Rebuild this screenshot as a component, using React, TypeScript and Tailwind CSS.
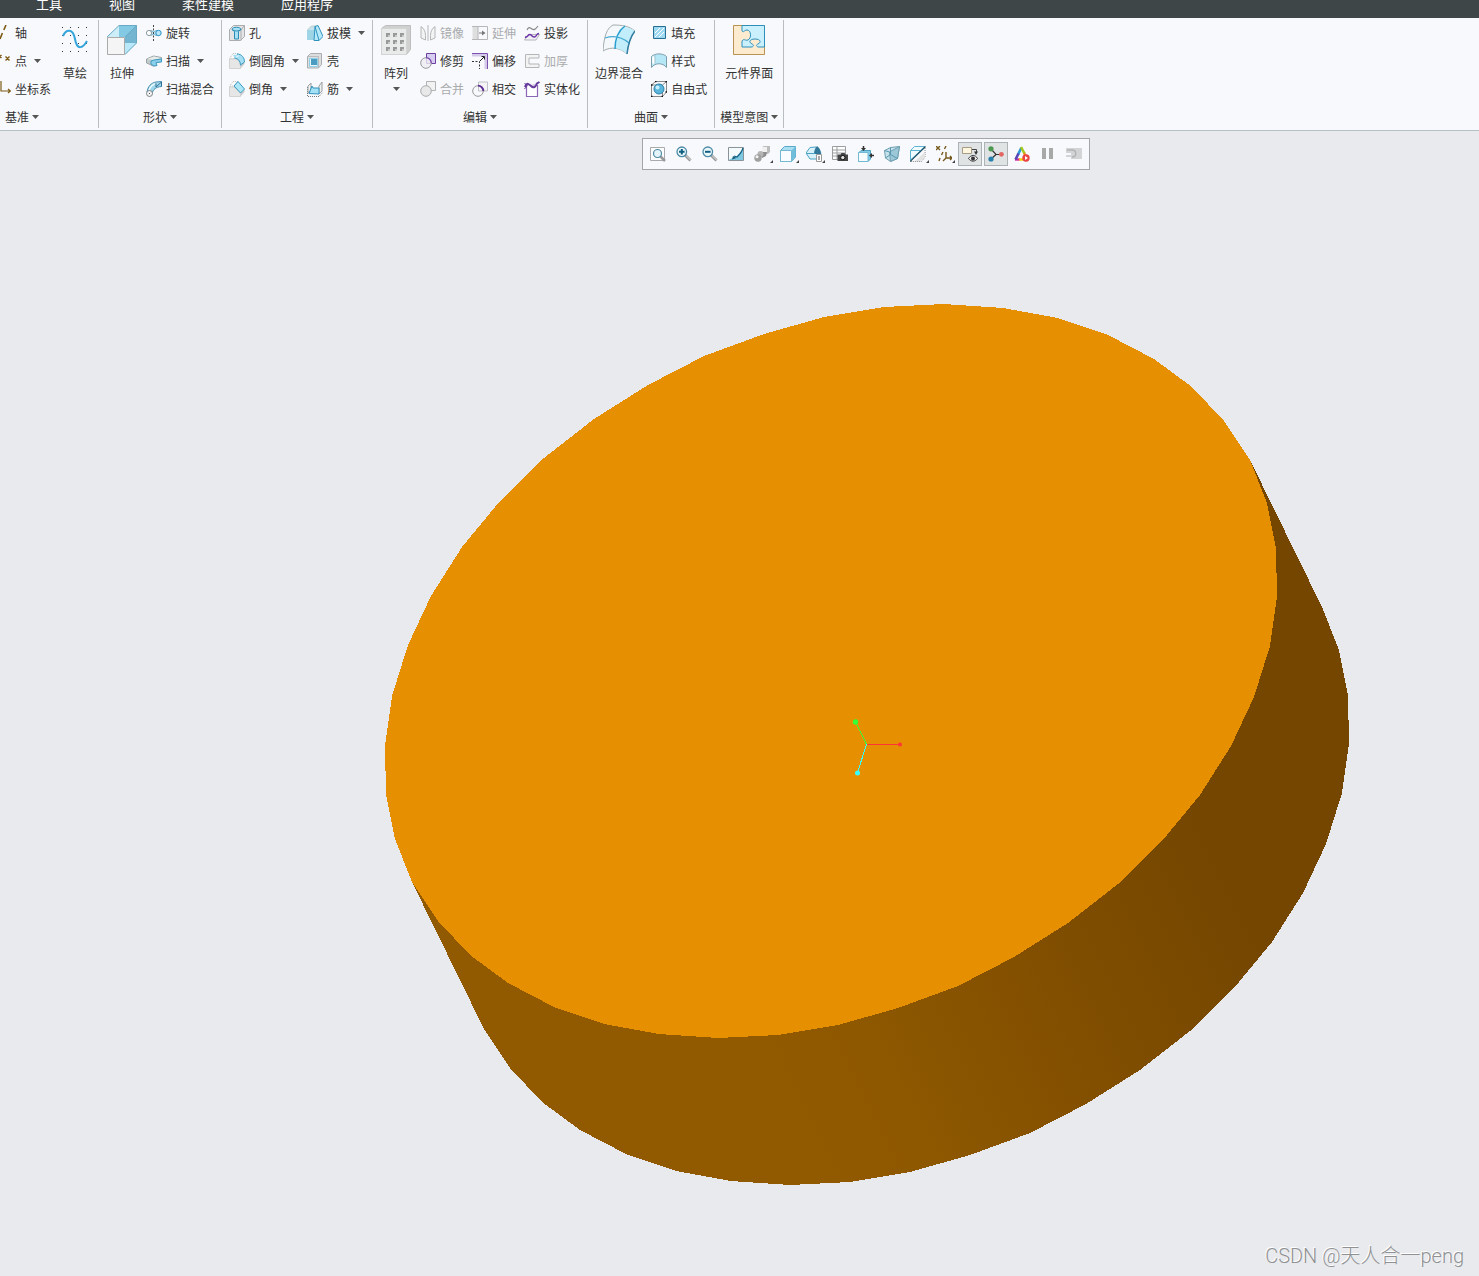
import type { ReactNode } from 'react';

type Tool = {
  label: string;
  icon: ReactNode;
  menu?: boolean;
  disabled?: boolean;
};

type ViewTool = {
  label: string;
  icon: ReactNode;
  menu?: boolean;
  active?: boolean;
};

const tabs = ['工具', '视图', '柔性建模', '应用程序'];

function Icon({ children }: { children: ReactNode }) {
  return (
    <svg viewBox="0 0 16 16" className="h-4 w-4 shrink-0" fill="none" aria-hidden="true">
      {children}
    </svg>
  );
}

// Datum icons run off the left edge of the window, only their right part shows
function DatumIcon({ children }: { children: ReactNode }) {
  return (
    <svg viewBox="0 0 11 16" className="h-4 w-[11px] shrink-0" fill="none" stroke="#7d5a14" strokeWidth="1.4" aria-hidden="true">
      {children}
    </svg>
  );
}

function BigIcon({ children }: { children: ReactNode }) {
  return (
    <svg viewBox="0 0 32 32" className="h-8 w-8 shrink-0" fill="none" aria-hidden="true">
      {children}
    </svg>
  );
}

function Caret() {
  return (
    <svg viewBox="0 0 7 4" className="h-1 w-[7px] shrink-0" aria-hidden="true">
      <path d="M0 0h7L3.5 4z" fill="#555" />
    </svg>
  );
}

const datumTools: Tool[] = [
  { label: '轴', icon: <DatumIcon><path d="M6 0 3.8 5M2.4 8 0 14" strokeWidth="1.6" /></DatumIcon> },
  {
    label: '点',
    menu: true,
    icon: <DatumIcon><path d="m5.5 3.5 4 4m0-4-4 4M-2 2l3.500 3m0-3L-2 5" /></DatumIcon>,
  },
  { label: '坐标系', icon: <DatumIcon><path d="M1 0v10h9M8 8l2.500 2L8 12" strokeWidth="1.2" /></DatumIcon> },
];

const shapeTools: Tool[] = [
  {
    label: '旋转',
    icon: (
      <Icon>
        <path d="M3 5.500c3 0 4 1 4.500 1.500C9 6 10 5.500 12 5.500v5c-2 0-3-.5-4.500-1.500-1 1-2.500 1.500-4.500 1.500z" fill="#bfe4f3" stroke="#58a9cc" />
        <circle cx="3" cy="8" r="2.600" fill="#fff" stroke="#8d9aa0" />
        <circle cx="12.500" cy="8" r="2.700" fill="#b9e6f8" stroke="#2f93c4" />
        <path d="M7.500 0v16" stroke="#444" strokeDasharray="2 1.500" />
      </Icon>
    ),
  },
  {
    label: '扫描',
    menu: true,
    icon: (
      <Icon>
        <path d="m.5 6 7-3 8 1.500v4L9 9.500l1 3-3 .5-4-2-2.500-1z" fill="#c3cacc" stroke="#9aa3a6" />
        <path d="m1 6 7-2.500 7 1.500-7 2z" fill="#e8ecec" />
        <path d="m5 8 3-1 7.500-1v3L10 9.500l1 3-3 .5-3-2z" fill="#8ccfe8" stroke="#3d9cc4" />
      </Icon>
    ),
  },
  {
    label: '扫描混合',
    icon: (
      <Icon>
        <path d="M1 11c1-6 4-9 9-10l5.500-.5v5C10 6 7 8 6 13z" fill="#9fd6ec" stroke="#4a8fb0" />
        <path d="M3 10c1-5 4-7 8-8" stroke="#e9f8fd" strokeWidth="1.500" />
        <path d="M10 1.500V6l5.500-5v4.500" stroke="#2f6f92" />
        <circle cx="3.500" cy="12.500" r="3" fill="#f3f3f3" stroke="#7d8487" />
        <path d="M3.500 12v1" stroke="#555" />
      </Icon>
    ),
  },
];

const engineeringTools: Tool[] = [
  {
    label: '孔',
    icon: (
      <Icon>
        <path d="m.5 4.500 4-4h11v11l-4 4H.5z" fill="#e4e4e4" stroke="#a9adaf" />
        <path d="M12 15.500V5l3.500-4.500" stroke="#a9adaf" />
        <path d="M3 4.500c0-3 9-3 9 0L9.500 6.500V14h-4V6.500z" fill="#a8e0f5" stroke="#2d8cb5" />
        <path d="M3 4.500c2 2 7 2 9 0" stroke="#2d8cb5" />
      </Icon>
    ),
  },
  {
    label: '倒圆角',
    menu: true,
    icon: (
      <Icon>
        <path d="M.5 5.500 4 .5h5L5.500 5.500z" fill="#fafafa" stroke="#bbb" strokeDasharray="1 1" />
        <path d="M.5 6H5c4 0 6.500 3 6.500 6v3.500H.5z" fill="#e6e6e6" stroke="#d2d2d2" />
        <path d="m11.500 15.500 4-4.500V9l-4 3z" fill="#c8cacb" />
        <path d="M3.500 1H8c5 0 7.500 4 7.500 8l-4 3c0-4-2.500-6.500-6-7z" fill="#a6dff4" />
        <path d="M8 1c5 0 7.500 4 7.500 8l-4 3c0-4-2.500-6.500-6-7" stroke="#3b9ac2" />
        <path d="M4 1.500h4M7 4l3-1.500" stroke="#e6f7fc" />
      </Icon>
    ),
  },
  {
    label: '倒角',
    menu: true,
    icon: (
      <Icon>
        <path d="M.5 5.500 4 .5h5L5 5z" fill="#fafafa" stroke="#bbb" strokeDasharray="1 1" />
        <path d="M.5 6H5l6.500 6v3.500H.5z" fill="#e6e6e6" stroke="#d2d2d2" />
        <path d="m11.500 15.500 4-4.500V8.500l-4 3.500z" fill="#c8cacb" />
        <path d="m5 5 4-4.500 6.500 7.500-4 4z" fill="#ace6f7" stroke="#3b9ac2" />
      </Icon>
    ),
  },
];

const engineeringExtras: Tool[] = [
  {
    label: '拔模',
    menu: true,
    icon: (
      <Icon>
        <path d="m0 5 4-4h6L7 14H0z" fill="#c4e3ed" />
        <path d="M0 5h7v10H0z" fill="#9dd4e6" />
        <path d="M.5 5 4.500 1H10" stroke="#c3cccf" />
        <path d="M8 1.500 11 .5l5 11-4 4H7z" fill="#b6eafa" stroke="#2f93be" />
        <path d="m8 1.500 4 14" stroke="#2f93be" />
      </Icon>
    ),
  },
  {
    label: '壳',
    icon: (
      <Icon>
        <path d="m.5 3.500 3-3h11v11l-3 3.500H.5z" fill="#dedede" stroke="#a9adaf" />
        <path d="M.5 3.500h11V15" stroke="#b8bbbd" />
        <path d="M2.500 5.500h8v8h-8z" fill="#e8f7fc" stroke="#8fd0e8" />
        <path d="M4 6h6v6H4z" fill="#4a9dc0" />
      </Icon>
    ),
  },
  {
    label: '筋',
    menu: true,
    icon: (
      <Icon>
        <path d="M.5 6v9.500H12l3.500-4" stroke="#777" strokeDasharray="1 1" />
        <path d="m1 5 3-3v7l-3 3zM12 5l3-4v9l-3 3z" fill="#f0f0f0" stroke="#9aa0a2" />
        <path d="M2 12.500 5 5l1 2h6v6z" fill="#a4e1f6" stroke="#2f93be" />
      </Icon>
    ),
  },
];

const editTools: Tool[][] = [
  [
    {
      label: '镜像',
      disabled: true,
      icon: (
        <Icon>
          <path d="M1 1.500c3 2 4.500 5 4.500 9V15L1 13zM15 1.500c-3 2-4.500 5-4.500 9V15l4.500-2z" fill="#f3f3f3" stroke="#b4b6b8" />
          <path d="M8 0v16" stroke="#b4b6b8" />
        </Icon>
      ),
    },
    {
      label: '修剪',
      icon: (
        <Icon>
          <path d="M6.500.5h9v10h-9z" fill="#d6cdf0" stroke="#6a3fa0" />
          <circle cx="6" cy="10" r="5.300" fill="#eeedf1" fillOpacity=".8" stroke="#999" />
          <path d="M6 4.700A5.300 5.300 0 0 1 11.300 10" stroke="#7a45b5" strokeWidth="1.200" />
        </Icon>
      ),
    },
    {
      label: '合并',
      disabled: true,
      icon: (
        <Icon>
          <path d="M6.500.5h9v9h-9z" fill="#f2f2f2" stroke="#b0b2b4" />
          <circle cx="6" cy="10" r="5.300" fill="#e8e8e8" stroke="#a9acad" />
        </Icon>
      ),
    },
  ],
  [
    {
      label: '延伸',
      disabled: true,
      icon: (
        <Icon>
          <path d="M.5 1.500H6v13H.5z" fill="#dedede" />
          <path d="M0 1.500h15.500v13H0M6 1.500v13" stroke="#b4b6b8" />
          <path d="M7 8h4" stroke="#777" />
          <path d="m10 5.500 3.500 2.500-3.500 2.500z" fill="#777" />
        </Icon>
      ),
    },
    {
      label: '偏移',
      icon: (
        <Icon>
          <path d="M0 2h14v14" stroke="#d5c9ea" strokeWidth="3" />
          <path d="M0 .5h15.500V16" stroke="#7b52ad" />
          <path d="M0 8.500h7.500V16" stroke="#333" strokeDasharray="2 1.500" />
          <path d="m8 8 4-4M9.500 3.500h3v3" stroke="#222" />
        </Icon>
      ),
    },
    {
      label: '相交',
      icon: (
        <Icon>
          <path d="M6.500 1h9v9h-9z" fill="#f5f5f7" stroke="#c0c0c6" />
          <circle cx="6" cy="10" r="5.300" stroke="#999" />
          <path d="M6 4.700A5.300 5.300 0 0 1 11.300 10" stroke="#5d2f96" strokeWidth="1.800" />
        </Icon>
      ),
    },
  ],
  [
    {
      label: '投影',
      icon: (
        <Icon>
          <path d="M3 5c2-4 3-2 5-1s3 1 6-3" stroke="#888" strokeWidth="1.200" />
          <path d="M.5 15 4 9.500h11.500L12 15z" fill="#f1f0f5" stroke="#b5b5ba" />
          <path d="M1 12c3 1 3-3 5-2.500s2 3 4.500 2.500S12 8.500 15 8.500" stroke="#6c35a8" strokeWidth="1.500" />
        </Icon>
      ),
    },
    {
      label: '加厚',
      disabled: true,
      icon: <Icon><path d="M15 1.500H1.500v13H15V11H5V5h10z" fill="#f3f3f3" stroke="#b4b6b8" /></Icon>,
    },
    {
      label: '实体化',
      icon: (
        <Icon>
          <path d="M2.500 5v10.500h11V4" fill="#fff" stroke="#8a68b5" strokeWidth="1.200" />
          <path d="M1 6c2-5 4-3 6-1 3 3 5 0 6-2.500L15.500 1" fill="#d9d0ea" stroke="#65399c" strokeWidth="2" />
          <path d="m.5 2 3 3M.5 8 3 5" stroke="#65399c" />
        </Icon>
      ),
    },
  ],
];

const surfaceTools: Tool[] = [
  {
    label: '填充',
    icon: (
      <Icon>
        <path d="M2.500 1.500h12v12h-12z" fill="#9ed8f0" stroke="#256f95" />
        <path d="m4 8 5-5M4 12l9-9M8 12l5-5" stroke="#fff" />
      </Icon>
    ),
  },
  {
    label: '样式',
    icon: (
      <Icon>
        <path d="M.5 3.500C4 0 12 0 15.500 3.500v11C12 9.500 4 9.500.5 14.500z" fill="#b6e7f7" stroke="#7d9fad" />
        <path d="M2.500 3.500v7" stroke="#fff" strokeWidth="2.500" />
        <path d="M4 1.500v9" stroke="#a5c4cf" />
      </Icon>
    ),
  },
  {
    label: '自由式',
    icon: (
      <Icon>
        <path d="m.5 4 4-3.500h11V11l-4 4.500H.5zM.5 4h11v11.500M11.500 4l4-3.500" stroke="#888" />
        <circle cx="8" cy="8" r="5" fill="#5bb6dc" stroke="#297ea8" />
        <circle cx="6.500" cy="6.500" r="2" fill="#c8effb" />
        <path d="M0 4h1.500M14.500.5H16M4 .5h1.500M10.500 15.500H12M0 15.500h1.500M14.500 11H16" stroke="#111" strokeWidth="1.500" />
      </Icon>
    ),
  },
];

const sketch: Tool = {
  label: '草绘',
  icon: (
    <BigIcon>
      <g fill="#333">
        {[3, 11, 19, 27].map((y) =>
          [3, 11, 19, 27].map((x) => <rect key={`${x}-${y}`} x={x} y={y} width="1" height="1" />),
        )}
      </g>
      <path d="M4 12c3-7 10-8 12 3 2 12 8 9 12 2" stroke="#34a5da" strokeWidth="2" />
    </BigIcon>
  ),
};

const extrude: Tool = {
  label: '拉伸',
  icon: (
    <BigIcon>
      <path d="M1 13 13 1.500h17.500L19 13z" fill="#cdeef9" />
      <path d="M13 1.500h17.500L19 13h-6z" fill="#83c9e3" />
      <path d="M30.500 1.500V19L19 30.500V13z" fill="#74b5d1" />
      <path d="M19 19h11.500L19 30.500z" fill="#b9e8f8" />
      <path d="M1 13 13 1.500h17.500V19L19 30.500M30.500 1.500 19 13" stroke="#6aa9c4" />
      <path d="M1.500 13.500h17v17h-17z" fill="#f5f5f5" stroke="#aaa" />
    </BigIcon>
  ),
};

const pattern: Tool = {
  label: '阵列',
  menu: true,
  icon: (
    <BigIcon>
      <path d="m1.500 4.500 4-3h25v24l-4 5h-25z" fill="#cfd0cf" stroke="#bdbebd" />
      <path d="M1.500 4.500h25v26h-25z" fill="#e9eaea" stroke="#d3d5d5" />
      {[10, 17, 24].map((y) =>
        [6, 13, 20].map((x) => (
          <g key={`${x}-${y}`}>
            <rect x={x} y={y - 1} width="4" height="4" fill="#c8c8c8" />
            <path d={`M${x} ${y - 1}h4v2h-2v2h-2z`} fill="#999" />
          </g>
        )),
      )}
    </BigIcon>
  ),
};

const boundaryBlend: Tool = {
  label: '边界混合',
  icon: (
    <BigIcon>
      <path d="M0 27C1 12 4 4 10 1c9 0 16 1 22 6-5 6-7 14-8 23-6-6-16-8-24-3z" fill="#f4f8fa" stroke="#a4abae" />
      <path d="M19 3c5 0 9 1 13 4-5 6-7 14-8 23-4-4-8-5-12-6 0-9 2-16 7-21z" fill="#c2edfb" />
      <path d="M22 2c-7 5-10 12-10 23" stroke="#2a9fd0" strokeWidth="1.500" />
      <path d="M2 14c9-3 17-1 24 5" stroke="#44a9d2" strokeWidth="1.200" />
      <path d="M32 7c-5 6-7 14-8 23" stroke="#347ea2" strokeWidth="1.500" />
    </BigIcon>
  ),
};

const componentInterface: Tool = {
  label: '元件界面',
  icon: (
    <BigIcon>
      <path d="M.5 1.500h31v29H.5z" fill="#fdebd0" stroke="#b89352" />
      <path d="M9 1.500h22.500V23H25c-2-1-2-2 0-3 4-2 2-5-3-5s-7 3-3 5c2 1 2 2 0 3H9v-6c2-3 3 0 6-1 4-2 3-10-1-10-3 0-3 3-5 1z" fill="#c9f0fc" stroke="#2f8fbb" />
    </BigIcon>
  ),
};

const lens = (sign?: ReactNode) => (
  <Icon>
    <path d="m9 9 5.500 5.500" stroke="#999" strokeWidth="3" />
    <path d="m10 9.500 4.500 4.500" stroke="#e5e5e5" />
    <circle cx="5.800" cy="5.800" r="4.800" fill="#eaf7fb" stroke="#4d8ba6" strokeWidth="1.300" />
    {sign}
  </Icon>
);

const viewTools: ViewTool[] = [
  {
    label: '重新调整',
    icon: (
      <Icon>
        <path d="M.5 1.500h14v13H.5z" fill="#fff" stroke="#a8aaac" />
        <path d="m10 10 5 5" stroke="#999" strokeWidth="2.500" />
        <circle cx="7.500" cy="7.500" r="4" fill="#e3f4fa" stroke="#4d8ba6" strokeWidth="1.200" />
      </Icon>
    ),
  },
  { label: '放大', icon: lens(<path d="M3 5.800h5.600M5.800 3v5.600" stroke="#0f5f82" strokeWidth="2" />) },
  { label: '缩小', icon: lens(<path d="M3 5.800h5.600" stroke="#0f5f82" strokeWidth="2" />) },
  {
    label: '重画',
    icon: (
      <Icon>
        <path d="M.5 1.500h15v13H.5z" fill="#7ec8e2" stroke="#8a9498" />
        <path d="M1 2h14c-1 3-4 7-7 9-3 1-5 1-7 3z" fill="#f4fafc" />
        <path d="M15 2c-1 4-3 6-6 9l-3-1" stroke="#136085" strokeWidth="1.200" />
        <path d="M5 10 8.500 12 4 13.500z" fill="#195f7d" />
      </Icon>
    ),
  },
  {
    label: '渲染选项',
    menu: true,
    icon: (
      <Icon>
        <path d="m8 1 2-1h6v6l-2 2H8z" fill="#bcbcbc" />
        <path d="M8 1h5v6H8z" fill="#f0f0f0" />
        <path d="M6 6h7l-1 4-4 2z" fill="#8d8d8d" />
        <circle cx="6.500" cy="8" r="3" fill="#b5b5b5" />
        <circle cx="4" cy="12" r="3.700" fill="#a0a0a0" />
        <circle cx="3" cy="10.800" r="1.500" fill="#f5f5f5" />
      </Icon>
    ),
  },
  {
    label: '显示样式',
    menu: true,
    icon: (
      <Icon>
        <path d="m.5 4.500 4-4h11v10.500l-4 4.500H.5z" fill="#a9dff1" stroke="#5ba9c8" />
        <path d="M15.500.5v10.500l-4 4.500V4.500z" fill="#6fbedb" />
        <path d="M.5 4.500h11v11H.5z" fill="#fafdff" stroke="#74b9d3" />
      </Icon>
    ),
  },
  {
    label: '已保存方向',
    menu: true,
    icon: (
      <Icon>
        <path d="M0 7 4 1.500 10 1l5 6-4 6H4z" fill="#d9f2fa" stroke="#4ba2c5" />
        <path d="M11 0c3 2 4 5 4 8H8c0-3 1-6 3-8z" fill="#32789b" />
        <path d="M0 7.500h9" stroke="#4ba2c5" />
        <path d="M10.500 8.500h5v7h-5z" fill="#fff" stroke="#999" />
        <path d="M12 11h2m-2 2h2" stroke="#555" />
      </Icon>
    ),
  },
  {
    label: '视图管理器',
    icon: (
      <Icon>
        <path d="M.5.500h13v13H.5zM.5 4h13M.5 7h13M.5 10h13M5 .5v13" fill="#fff" stroke="#9b9d9f" />
        <path d="M5.500 8.500h3l1-1.500h3l1 1.500H16v6.500H5.500z" fill="#444" />
        <circle cx="10.800" cy="11.600" r="2.200" fill="#ddd" stroke="#111" />
      </Icon>
    ),
  },
  {
    label: '视图法向',
    icon: (
      <Icon>
        <path d="m.5 7 2.500-2.500h9.500V13L10 15.500H.5z" fill="#85cbe4" stroke="#4ba2c5" />
        <path d="M.5 6.500H10v9H.5z" fill="#f7fcfe" stroke="#74b9d3" />
        <path d="M5.500 0v3M16 9.500h-3" stroke="#333" strokeWidth="1.500" />
        <path d="M3 2h5L5.500 5zM14 7v5l-3-2.500z" fill="#333" />
      </Icon>
    ),
  },
  {
    label: '透视图',
    icon: (
      <Icon>
        <path d="m.5 4.500 6-3 9-1-2 12-7 3-5-3.500z" fill="#c7e2eb" stroke="#6f9fb1" />
        <path d="m5.500 6 10-5.500-2 12-7 3z" fill="#9cc8d8" stroke="#6f9fb1" />
        <path d="m.5 4.500 5 1.500M6.500 1.500v7l-5 3.500m5-3.500 7 4" stroke="#5798b0" />
      </Icon>
    ),
  },
  {
    label: '截面',
    menu: true,
    icon: (
      <Icon>
        <path d="M15 2v9l-3.500 4.500H1" stroke="#888" strokeDasharray="1 1" />
        <path d="m5 15 10-9v5l-4 4z" fill="#e3e3e3" />
        <path d="m.5 4.500 4-4H15L.5 14z" fill="#f0fbff" stroke="#5cb3d5" />
        <path d="M.5 4.500h10" stroke="#5cb3d5" />
        <path d="M0 15.500 15.500.5" stroke="#1d4e64" strokeWidth="1.200" />
      </Icon>
    ),
  },
  {
    label: '基准显示过滤器',
    menu: true,
    icon: (
      <Icon>
        <path d="m0 0 4 4m0-4L0 4M10 0 8.500 3M7 6l-1.500 3M4 12l-1 3M10 6v6h6M14 10l2 2-2 2M10 12l-3 3" stroke="#76591d" strokeWidth="1.400" />
      </Icon>
    ),
  },
  {
    label: '注释显示',
    active: true,
    icon: (
      <Icon>
        <path d="M.5 1.500h9v6h-9z" fill="#fff6e0" stroke="#a79c85" />
        <path d="M10 3.500h4.500V7" stroke="#444" />
        <path d="M12 5.500h4L14 9z" fill="#333" />
        <path d="M6.500 12.500c2.500-4 7-4 9 0-2.500 3.500-6.500 3.500-9 0z" fill="#eee" stroke="#333" />
        <circle cx="11" cy="12.500" r="2" fill="#333" />
      </Icon>
    ),
  },
  {
    label: '旋转中心',
    active: true,
    icon: (
      <Icon>
        <path d="m3 3 5 5.500h5M8 8.500 3 13" stroke="#333" strokeWidth="1.200" />
        <circle cx="3" cy="2.800" r="2.600" fill="#4c9850" />
        <circle cx="13.400" cy="8.300" r="2.400" fill="#e26562" />
        <circle cx="3" cy="13" r="2.600" fill="#287fab" />
      </Icon>
    ),
  },
  {
    label: '仿真实时',
    icon: (
      <Icon>
        <path d="M7.500 1.500 4 8.500" stroke="#2c9bd5" strokeWidth="2.600" />
        <path d="m7 1 3.500 6.500" stroke="#a4c820" strokeWidth="2.600" />
        <path d="m10 7 3.500 6.500" stroke="#ec8b1b" strokeWidth="2.600" />
        <path d="M1 13.500h5" stroke="#d32aa3" strokeWidth="2.400" />
        <path d="M5 13.500h6" stroke="#f3c900" strokeWidth="2.400" />
        <path d="m4.500 7.500-3 6" stroke="#5846b5" strokeWidth="2.600" />
        <circle cx="12" cy="12" r="3.700" fill="#e94343" />
        <path d="m11 10 3 2-3 2z" fill="#fff" />
      </Icon>
    ),
  },
  {
    label: '暂停',
    icon: <Icon><path d="M2 2h4v11H2zM9 2h4v11H9z" fill="#a8a8a8" /></Icon>,
  },
  {
    label: '停止仿真',
    icon: (
      <Icon>
        <path d="M0 2h16v11H5v-2H0V9h5V7H0z" fill="#d3d4d5" />
        <path d="M1 4h5c5 0 5 7 0 7" stroke="#b3b4b5" strokeWidth="1.500" />
      </Icon>
    ),
  },
];

function ToolButton({ tool }: { tool: Tool }) {
  return (
    <button
      type="button"
      disabled={tool.disabled}
      className="flex h-7 items-center gap-1 whitespace-nowrap text-[#333] disabled:text-[#a9abad]"
    >
      {tool.icon}
      <span>{tool.label}</span>
      {tool.menu ? <span className="ml-[3px]"><Caret /></span> : null}
    </button>
  );
}

function ToolColumn({ tools }: { tools: Tool[] }) {
  return (
    <div className="flex flex-col items-start">
      {tools.map((tool) => (
        <ToolButton key={tool.label} tool={tool} />
      ))}
    </div>
  );
}

function BigButton({ tool }: { tool: Tool }) {
  return (
    <button type="button" className="flex min-w-8 flex-col items-center pt-[5px] whitespace-nowrap">
      {tool.icon}
      <span className="mt-[9px]">{tool.label}</span>
      {tool.menu ? <span className="mt-1.5"><Caret /></span> : null}
    </button>
  );
}

function Group({ title, flush, children }: { title: string; flush?: boolean; children: ReactNode }) {
  return (
    <section aria-label={title} className="flex shrink-0">
      <div className="flex flex-col pt-px">
        <div className={`flex h-[84px] items-start justify-center gap-2 pr-[7px] ${flush ? 'pl-0' : 'pl-[7px]'}`}>{children}</div>
        <button
          type="button"
          className={`flex h-[27px] items-center gap-[3px] px-[5px] whitespace-nowrap ${flush ? 'justify-start' : 'justify-center'}`}
        >
          {title}
          <Caret />
        </button>
      </div>
      <div className="my-0.5 w-px bg-[#b9bdc1]" />
    </section>
  );
}

// Half of the facetted rim, the other half is its point reflection
const halfRim = [
  [944, 304], [1003, 308], [1058, 318], [1108, 335], [1154, 359], [1192, 387], [1224, 421], [1250, 460],
  [1267, 503], [1276, 548], [1277, 596], [1270, 646], [1254, 697], [1231, 746], [1200, 795], [1162, 841],
  [1118, 884], [1068, 923], [1014, 957], [958, 986], [898, 1008], [838, 1025], [778, 1035],
];
const rim = [...halfRim, ...halfRim.map(([x, y]) => [1662 - x, 1342 - y])];
const base = rim.map(([x, y]) => [x + 72, y + 147]);
const toPoints = (points: number[][]) => points.map((p) => p.join(',')).join(' ');

function Model() {
  return (
    <svg viewBox="0 131 1479 1145" className="block w-full" role="img" aria-label="圆柱模型">
      <defs>
        <linearGradient id="side" gradientUnits="userSpaceOnUse" x1="720" y1="1038" x2="1194" y2="806">
          <stop offset="0" stopColor="#925a00" />
          <stop offset="0.25" stopColor="#8e5800" />
          <stop offset="0.6" stopColor="#824f00" />
          <stop offset="1" stopColor="#744600" />
        </linearGradient>
      </defs>
      <g shapeRendering="crispEdges">
        <polygon points={toPoints(base)} fill="url(#side)" />
        <polygon points="1250,460 1322,607 484,1029 412,882" fill="url(#side)" />
        <polygon points={toPoints(rim)} fill="#e68f00" />
        <path d="M867 744h33v1h-33z" fill="#ff3535" />
        <path d="m866.500 744.500-11-23" stroke="#35ff35" />
        <path d="m866.500 744.500-9 28" stroke="#35ffff" />
      </g>
      <circle cx="900" cy="744.500" r="2" fill="#ff3535" />
      <circle cx="855.500" cy="722" r="2.700" fill="#35ff35" />
      <circle cx="857.500" cy="773" r="2.500" fill="#35ffff" />
    </svg>
  );
}

export default function App() {
  return (
    <div className="min-h-screen overflow-hidden bg-[#e9eaed] font-['Noto_Sans_CJK_SC',sans-serif] text-xs text-[#333]">
      <nav className="flex h-[18px] items-end gap-[47px] overflow-hidden bg-[#3e4648] pb-[5px] pl-9 text-[13px] leading-[18px] text-white">
        {tabs.map((tab) => (
          <a key={tab} href="#" className="shrink-0">
            {tab}
          </a>
        ))}
      </nav>

      <header className="flex border-b border-[#b4c0c5] bg-[#f8f9fc]">
        <Group title="基准" flush>
          <ToolColumn tools={datumTools} />
          <BigButton tool={sketch} />
        </Group>
        <Group title="形状">
          <BigButton tool={extrude} />
          <ToolColumn tools={shapeTools} />
        </Group>
        <Group title="工程">
          <ToolColumn tools={engineeringTools} />
          <ToolColumn tools={engineeringExtras} />
        </Group>
        <Group title="编辑">
          <BigButton tool={pattern} />
          {editTools.map((tools) => (
            <ToolColumn key={tools[0].label} tools={tools} />
          ))}
        </Group>
        <Group title="曲面">
          <BigButton tool={boundaryBlend} />
          <ToolColumn tools={surfaceTools} />
        </Group>
        <Group title="模型意图">
          <BigButton tool={componentInterface} />
        </Group>
      </header>

      <main className="relative">
        <Model />

        <div
          role="toolbar"
          aria-label="图形工具栏"
          className="absolute left-[642px] top-[7px] flex gap-0.5 border border-[#a3a5a7] bg-[#f8f9fc] p-[3px]"
        >
          {viewTools.map((tool) => (
            <button
              key={tool.label}
              type="button"
              aria-label={tool.label}
              aria-pressed={tool.active}
              className={`relative flex h-6 w-6 items-center justify-center border ${
                tool.active ? 'border-[#adb2b4] bg-[#dfe3e4]' : 'border-transparent'
              }`}
            >
              {tool.icon}
              {tool.menu ? (
                <svg viewBox="0 0 3 3" className="absolute bottom-0.5 right-0 h-[3px] w-[3px]" aria-hidden="true">
                  <path d="M3 0v3H0z" fill="#444" />
                </svg>
              ) : null}
            </button>
          ))}
        </div>

        <p className="absolute bottom-1.5 right-[15px] font-[Roboto,'Noto_Sans_CJK_SC',sans-serif] text-xl font-light text-[#8f9193] [text-shadow:-1px_-1px_0_#fff]">
          CSDN @天人合一peng
        </p>
      </main>
    </div>
  );
}
